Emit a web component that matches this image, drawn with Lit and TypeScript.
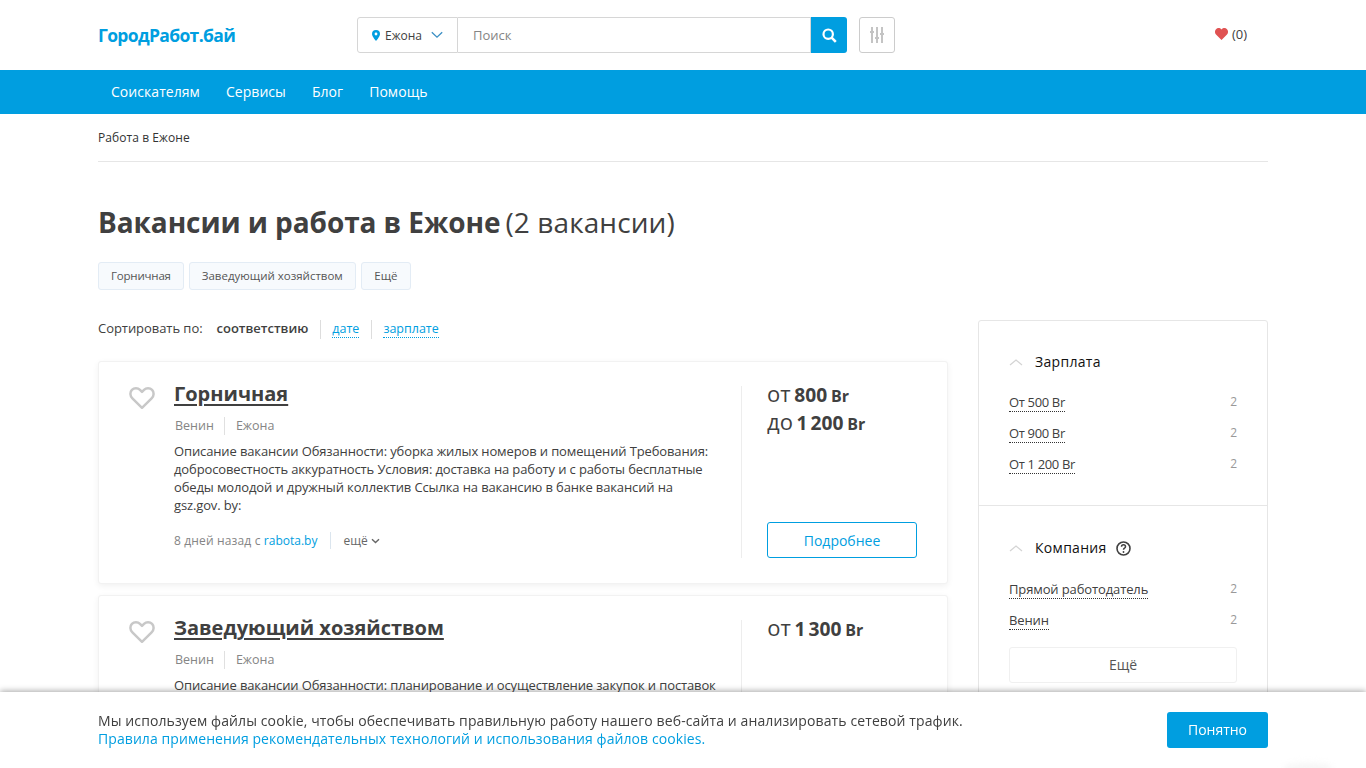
import { LitElement, html, css } from "lit";
import { customElement } from "lit/decorators.js";

const heartOutline = html`<svg class="fav" width="26" height="24" viewBox="0 0 26 24"><path d="M13 21.800 3.400 12.400C.8 9.800.8 6 2.900 3.900c2.200-2.200 5.900-2.200 8.100 0l2 2 2-2c2.200-2.200 5.900-2.200 8.100 0 2.100 2.100 2.100 5.900-.5 8.500L13 21.800Z" fill="none" stroke="#c8c8c8" stroke-width="2.500" stroke-linejoin="round"/></svg>`;

const chevUp = html`<svg class="chev" width="14" height="8" viewBox="0 0 14 8"><path d="M1 7 7 2l6 5" fill="none" stroke="#d4d4d4" stroke-width="1.300"/></svg>`;

@customElement("app-root")
export class AppRoot extends LitElement {
  static styles = css`
    :host { display: block; height: 100vh; overflow: hidden; font-family: "Open Sans", sans-serif; color: #404040; background: #fff; font-size: 13px; }
    * { box-sizing: border-box; }
    a { color: inherit; text-decoration: none; }
    .wrap { width: 1170px; margin-left: 98px; }
    .head { height: 70px; display: flex; align-items: center; }
    .logo { width: 259px; font-size: 17.500px; font-weight: 700; color: #009ee0; letter-spacing: -0.65px; }
    .search { display: flex; width: 490px; height: 36px; }
    .city { width: 101px; border: 1px solid #d6d6d6; border-radius: 3px 0 0 3px; display: flex; align-items: center; padding-left: 14px; gap: 5px; font-size: 12px; color: #404040; }
    .city svg:last-child { margin-left: 4px; }
    .input { flex: 1; border: 1px solid #d6d6d6; border-left: 0; display: flex; align-items: center; padding-left: 15px; color: #858585; font-size: 13px; }
    .go { width: 36px; background: #009ee0; border-radius: 0 3px 3px 0; display: flex; align-items: center; justify-content: center; }
    .tune { width: 36px; height: 36px; margin-left: 12px; border: 1px solid #ccc; border-radius: 3px; display: flex; align-items: center; justify-content: center; }
    .favs { margin-left: 320px; display: flex; align-items: center; gap: 4px; font-size: 13px; color: #404040; line-height: 16px; padding-bottom: 2px; }
    .nav { background: #009ee0; height: 44px; }
    .nav .wrap { display: flex; height: 100%; align-items: center; padding: 0 0 2px 13px; gap: 26px; color: #fff; font-size: 14px; letter-spacing: .05px; }
    .crumbs { height: 48px; border-bottom: 1px solid #e6e6e6; display: flex; align-items: center; font-size: 12px; color: #333; letter-spacing: .07px; }
    h1 { margin: 40px 0 0; font-size: 28px; line-height: 40px; font-weight: 700; color: #404040; white-space: nowrap; letter-spacing: -.08px; }
    h1 span { font-weight: 400; font-size: 28px; margin-left: 5px; letter-spacing: .1px; }
    .tags { display: flex; gap: 5px; margin-top: 20px; }
    .tag { height: 28px; padding: 0 12px 2px; border: 1px solid #e3ecf5; border-radius: 3px; background: #f7fafd; display: flex; align-items: center; font-size: 11.500px; color: #555; }
    .tag:first-child { letter-spacing: -.2px; }
    .tag:last-child { padding: 0 12.500px 2px; }
    .cols { display: flex; gap: 30px; margin-top: 30px; align-items: flex-start; }
    .main { width: 850px; }
    .sort { height: 41px; display: flex; align-items: flex-start; font-size: 13px; color: #404040; }
    .sort > * { line-height: 17px; padding-bottom: 2px; }
    .sort .lbl { margin-right: 14px; letter-spacing: -.05px; }
    .sort b { font-weight: 600; padding-right: 12px; border-right: 1px solid #ddd; }
    .sort .lnk { margin-left: 11px; padding-right: 12px; font-size: 12.500px; }
    .sort .lnk.bar { border-right: 1px solid #ddd; }
    .sort .lnk span { color: #009ee0; border-bottom: 1px dotted #009ee0; }
    .card { height: 223px; background: #fff; border: 1px solid #f2f2f2; border-radius: 3px; box-shadow: 0 2px 6px rgba(0,0,0,.06); margin-bottom: 11px; display: flex; padding: 24px 30px 0 30px; }
    .fav { flex: none; }
    .body { width: 546px; margin-left: 19px; }
    .title { font-size: 20px; line-height: 20px; margin-top: -2px; font-weight: 700; color: #404040; text-decoration: underline; text-underline-offset: 3px; display: block; }
    .meta { display: flex; margin-top: 13px; font-size: 12.500px; line-height: 18px; color: #858585; padding-left: 1px; }
    .meta span:first-child { padding-right: 10px; border-right: 1px solid #e0e0e0; }
    .meta span:last-child { padding-left: 11px; }
    .desc { margin: 7px 0 0; font-size: 13px; line-height: 18px; color: #404040; letter-spacing: -.13px; }
    .foot { display: flex; align-items: center; margin-top: 18px; font-size: 12px; color: #858585; }
    .foot .src { letter-spacing: .15px; }
    .foot a { color: #009ee0; letter-spacing: 0; }
    .foot .more { margin-left: 13px; padding-left: 12px; border-left: 1px solid #dbe5ee; line-height: 17px; color: #666; display: flex; align-items: center; gap: 3px; }
    .side { width: 176px; height: 172px; margin-left: 22px; border-left: 1px solid #ededed; padding-left: 25px; display: flex; flex-direction: column; justify-content: space-between; }
    .sal { font-size: 22px; line-height: 28px; margin-top: -7px; color: #404040; word-spacing: -2px; }
    .sal b { font-weight: 700; font-size: 19.200px; line-height: 1; }
    .sal small { font-size: 16px; font-weight: 700; line-height: 1; }
    .btn { display: flex; align-items: center; justify-content: center; width: 150px; height: 36px; border: 1px solid #009ee0; border-radius: 3px; color: #009ee0; font-size: 14px; }
    aside { width: 290px; border: 1px solid #e6e6e6; border-radius: 3px; background: #fff; }
    .group { padding: 29px 30px 0; border-bottom: 1px solid #e6e6e6; height: 185px; }
    .group .opts { margin-top: 20px; }
    .group + .group { border-bottom: 0; height: 240px; padding-top: 30px; }
    .group + .group .opts { margin-top: 21px; }
    .gh { display: flex; align-items: center; gap: 12px; font-size: 14px; font-weight: 500; color: #111; line-height: 24px; }
    .gh span { letter-spacing: .3px; }
    .gh svg.q { margin-left: -3px; }
    .opt { display: flex; justify-content: space-between; height: 31px; font-size: 13px; line-height: 17px; color: #404040; }
    .opt a { align-self: flex-start; height: 18px; border-bottom: 1px dotted #333; letter-spacing: -.12px; }
    .opt a.num { letter-spacing: -.35px; }
    .opt i { font-style: normal; font-size: 12px; color: #999; margin-top: -1px; }
    .allbtn { height: 36px; padding-bottom: 2px; border: 1px solid #f0f0f0; border-radius: 3px; display: flex; align-items: center; justify-content: center; font-size: 14px; color: #555; margin-top: 4px; }
    .cookie { position: fixed; left: 0; right: 0; bottom: 0; height: 76px; background: #fff; box-shadow: 0 -1px 6px rgba(0,0,0,.35); }
    .cookie .wrap { display: flex; justify-content: space-between; align-items: center; height: 100%; font-size: 14px; line-height: 18px; color: #404040; }
    .cookie .msg { letter-spacing: .11px; }
    .cookie .rules { color: #009ee0; display: block; letter-spacing: .075px; }
    .ok { width: 101px; height: 36px; border-radius: 3px; background: #009ee0; color: #fff; display: flex; align-items: center; justify-content: center; font-size: 14px; }
    .blob { position: absolute; right: 33px; bottom: -6px; width: 50px; height: 11px; border-radius: 50%; background: #f6f6f6; filter: blur(3px); }
  `;

  private card(title: string, salary: unknown, desc: string, foot: boolean) {
    return html`<article class="card">
      ${heartOutline}
      <div class="body">
        <a class="title">${title}</a>
        <div class="meta"><span>Венин</span><span>Ежона</span></div>
        <p class="desc">${desc}</p>
        ${foot ? html`<div class="foot"><span class="src">8 дней назад с <a>rabota.by</a></span><span class="more">ещё <svg width="9" height="6" viewBox="0 0 9 6"><path d="M1 1.200 4.500 4.600 8 1.200" fill="none" stroke="#666" stroke-width="1.400"/></svg></span></div>` : ""}
      </div>
      <div class="side">
        <div class="sal">${salary}</div>
        ${foot ? html`<a class="btn">Подробнее</a>` : ""}
      </div>
    </article>`;
  }

  render() {
    return html`
      <div class="wrap head">
        <a class="logo">ГородРабот.бай</a>
        <div class="search">
          <div class="city">
            <svg width="8" height="11" viewBox="0 0 8 11"><path fill-rule="evenodd" d="M4 0a4 4 0 0 1 4 4c0 2.600-4 7-4 7S0 6.600 0 4a4 4 0 0 1 4-4Zm0 2.600a1.400 1.400 0 1 0 0 2.800 1.400 1.400 0 0 0 0-2.800Z" fill="#009ee0"/></svg>
            <span>Ежона</span>
            <svg width="12" height="8" viewBox="0 0 12 8"><path d="M.8 1.200 6 6.200l5.200-5" fill="none" stroke="#3b8fc4" stroke-width="1.300"/></svg>
          </div>
          <div class="input">Поиск</div>
          <div class="go"><svg width="15" height="15" viewBox="0 0 15 15"><circle cx="6.200" cy="6.200" r="4.700" fill="none" stroke="#fff" stroke-width="2.200"/><path d="m9.600 9.600 4.200 4.200" stroke="#fff" stroke-width="2.600"/></svg></div>
        </div>
        <div class="tune"><svg width="14" height="16" viewBox="0 0 14 16" fill="#c4c4c4"><rect x="1" y="0" width="2" height="16"/><rect x="6" y="0" width="2" height="16"/><rect x="11" y="0" width="2" height="16"/><rect x="0" y="4" width="4" height="2"/><rect x="5" y="10" width="4" height="2"/><rect x="10" y="6" width="4" height="2"/></svg></div>
        <div class="favs"><svg width="13" height="12" viewBox="0 0 13 12"><path d="M6.500 12 1 6.500C-.4 5-.3 2.600 1 1.200 2.500-.3 4.800-.3 6.500 1.600 8.200-.3 10.500-.3 12 1.200c1.300 1.400 1.400 3.800 0 5.300L6.500 12Z" fill="#e05252"/></svg><span>(0)</span></div>
      </div>
      <nav class="nav"><div class="wrap"><a>Соискателям</a><a>Сервисы</a><a>Блог</a><a>Помощь</a></div></nav>
      <div class="wrap">
        <div class="crumbs">Работа в Ежоне</div>
        <h1>Вакансии и работа в Ежоне<span>(2 вакансии)</span></h1>
        <div class="tags"><a class="tag">Горничная</a><a class="tag">Заведующий хозяйством</a><a class="tag">Ещё</a></div>
        <div class="cols">
          <div class="main">
            <div class="sort">
              <span class="lbl">Сортировать по:</span><b>соответствию</b>
              <a class="lnk bar"><span>дате</span></a><a class="lnk"><span>зарплате</span></a>
            </div>
            ${this.card("Горничная", html`от <b>800</b> <small>Br</small><br>до <b>1 200</b> <small>Br</small>`, "Описание вакансии Обязанности: уборка жилых номеров и помещений Требования: добросовестность аккуратность Условия: доставка на работу и с работы бесплатные обеды молодой и дружный коллектив Ссылка на вакансию в банке вакансий на gsz.gov. by:", true)}
            ${this.card("Заведующий хозяйством", html`от <b>1 300</b> <small>Br</small>`, "Описание вакансии Обязанности: планирование и осуществление закупок и поставок", false)}
          </div>
          <aside>
            <section class="group">
              <div class="gh">${chevUp}<span>Зарплата</span></div>
              <div class="opts">
                <div class="opt"><a class="num">От 500 Br</a><i>2</i></div>
                <div class="opt"><a class="num">От 900 Br</a><i>2</i></div>
                <div class="opt"><a class="num">От 1 200 Br</a><i>2</i></div>
              </div>
            </section>
            <section class="group">
              <div class="gh">${chevUp}<span>Компания</span><svg class="q" width="15" height="15" viewBox="0 0 15 15"><circle cx="7.500" cy="7.500" r="6.500" fill="none" stroke="#404040" stroke-width="1.600"/><path d="M5.500 5.800c0-1.200 1-2 2-2s2 .8 2 1.900c0 1.500-2 1.500-2 3" fill="none" stroke="#404040" stroke-width="1.500"/><circle cx="7.500" cy="11" r=".9" fill="#404040"/></svg></div>
              <div class="opts">
                <div class="opt"><a>Прямой работодатель</a><i>2</i></div>
                <div class="opt"><a>Венин</a><i>2</i></div>
              </div>
              <a class="allbtn">Ещё</a>
            </section>
          </aside>
        </div>
      </div>
      <div class="cookie"><div class="wrap">
        <div class="msg">Мы используем файлы cookie, чтобы обеспечивать правильную работу нашего веб-сайта и анализировать сетевой трафик.<a class="rules">Правила применения рекомендательных технологий и использования файлов cookies.</a></div>
        <a class="ok">Понятно</a>
      </div><div class="blob"></div></div>
    `;
  }
}
